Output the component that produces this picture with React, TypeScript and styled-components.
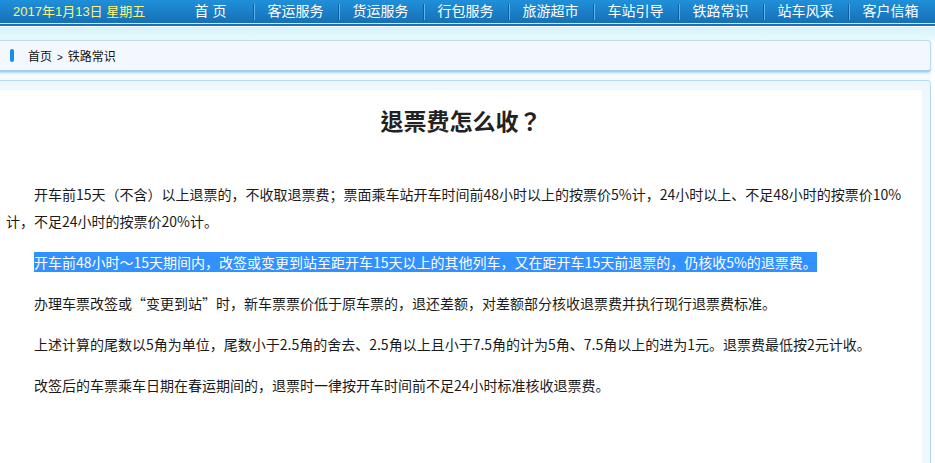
import React from 'react'
import styled, { createGlobalStyle } from 'styled-components'

const GlobalStyle = createGlobalStyle`
  html, body {
    margin: 0;
    padding: 0;
    background: #ffffff;
    overflow: hidden;
  }
  body {
    font-family: "Liberation Sans", "Noto Sans CJK SC", sans-serif;
    color: #222;
  }
`

const navItems = ['首 页', '客运服务', '货运服务', '行包服务', '旅游超市', '车站引导', '铁路常识', '站车风采', '客户信箱']

const paragraphs = [
  '开车前15天（不含）以上退票的，不收取退票费；票面乘车站开车时间前48小时以上的按票价5%计，24小时以上、不足48小时的按票价10%计，不足24小时的按票价20%计。',
  '开车前48小时～15天期间内，改签或变更到站至距开车15天以上的其他列车，又在距开车15天前退票的，仍核收5%的退票费。',
  '办理车票改签或“变更到站”时，新车票票价低于原车票的，退还差额，对差额部分核收退票费并执行现行退票费标准。',
  '上述计算的尾数以5角为单位，尾数小于2.5角的舍去、2.5角以上且小于7.5角的计为5角、7.5角以上的进为1元。退票费最低按2元计收。',
  '改签后的车票乘车日期在春运期间的，退票时一律按开车时间前不足24小时标准核收退票费。',
]

const TopBar = styled.div`
  display: flex;
  height: 23px;
  background: linear-gradient(#1f90d9, #1670b6);
  border-bottom: 1px solid #cfe6f6;
`
const DateText = styled.div`
  width: 168px;
  padding-left: 13px;
  box-sizing: border-box;
  font-size: 13px;
  line-height: 23px;
  color: #fff27a;
  white-space: nowrap;
`
const Nav = styled.ul`
  display: flex;
  margin: 0;
  padding: 0;
  list-style: none;
`
const NavItem = styled.li<{ $first?: boolean }>`
  position: relative;
  width: 85px;
  font-size: 14px;
  line-height: 23px;
  color: #ffffff;
  text-align: center;
  white-space: nowrap;
  &::before {
    content: '';
    display: ${(p) => (p.$first ? 'none' : 'block')};
    position: absolute;
    left: 0;
    top: 4px;
    width: 1px;
    height: 16px;
    background: #0f5d9e;
    box-shadow: 1px 0 0 #62b3ea;
  }
`
const DarkLine = styled.div`
  height: 2px;
  background: #1d6fb3;
  border-bottom: 1px solid #ffffff;
`
const Band = styled.div`
  height: 13px;
  background: linear-gradient(#d4f1f8, #eafafd);
`
const Main = styled.div`
  margin: 0 4px 0 -12px;
  background: #f6fbff;
`
const Crumb = styled.div`
  display: flex;
  align-items: center;
  gap: 14px;
  height: 29px;
  padding-left: 21px;
  background: #f3f8ff;
  border: 1px solid #b8dcf8;
  border-bottom: 2px solid #9fcff6;
  border-radius: 4px;
  box-shadow: 0 1px 2px rgba(110, 180, 235, 0.5);
  font-size: 12px;
  color: #111;
`
const Marker = styled.span`
  width: 4px;
  height: 13px;
  border-radius: 2px;
  background: #1a8ce8;
`
const Arrow = styled.span`
  font-size: 10px;
  margin: 0 5px;
`
const Spacer = styled.div`
  height: 8px;
`
const ContentBox = styled.div`
  padding: 9px 8px 0 8px;
  background: #eef7fe;
  border: 1px solid #b5dcf7;
  border-bottom: none;
  border-radius: 4px 4px 0 0;
`
const Article = styled.div`
  min-height: 380px;
  background: #ffffff;
  padding: 15px 6px 0 9px;
`
const Title = styled.h1`
  margin: 0 0 46px;
  font-family: "Noto Sans CJK TC", "Noto Sans CJK SC", sans-serif;
  font-size: 23px;
  line-height: 30px;
  font-weight: bold;
  text-align: center;
  color: #222;
`
const Para = styled.p`
  margin: 0 0 14px;
  font-family: "Noto Sans CJK SC", "Liberation Sans", sans-serif;
  font-size: 14px;
  line-height: 27px;
  text-indent: 2em;
  color: #1a1a1a;
`
const Selected = styled.span`
  background: #3390ff;
  color: #ffffff;
`

export default function App() {
  return (
    <>
      <GlobalStyle />
      <TopBar>
        <DateText>2017年1月13日 星期五</DateText>
        <Nav>
          {navItems.map((item, i) => (
            <NavItem key={item} $first={i === 0}>
              {item}
            </NavItem>
          ))}
        </Nav>
      </TopBar>
      <DarkLine />
      <Band />
      <Main>
        <Crumb>
          <Marker />
          <span>
            首页<Arrow>&gt;</Arrow>铁路常识
          </span>
        </Crumb>
        <Spacer />
        <ContentBox>
          <Article>
            <Title>退票费怎么收？</Title>
            {paragraphs.map((text, i) => (
              <Para key={i}>{i === 1 ? <Selected>{text}</Selected> : text}</Para>
            ))}
          </Article>
        </ContentBox>
      </Main>
    </>
  )
}
